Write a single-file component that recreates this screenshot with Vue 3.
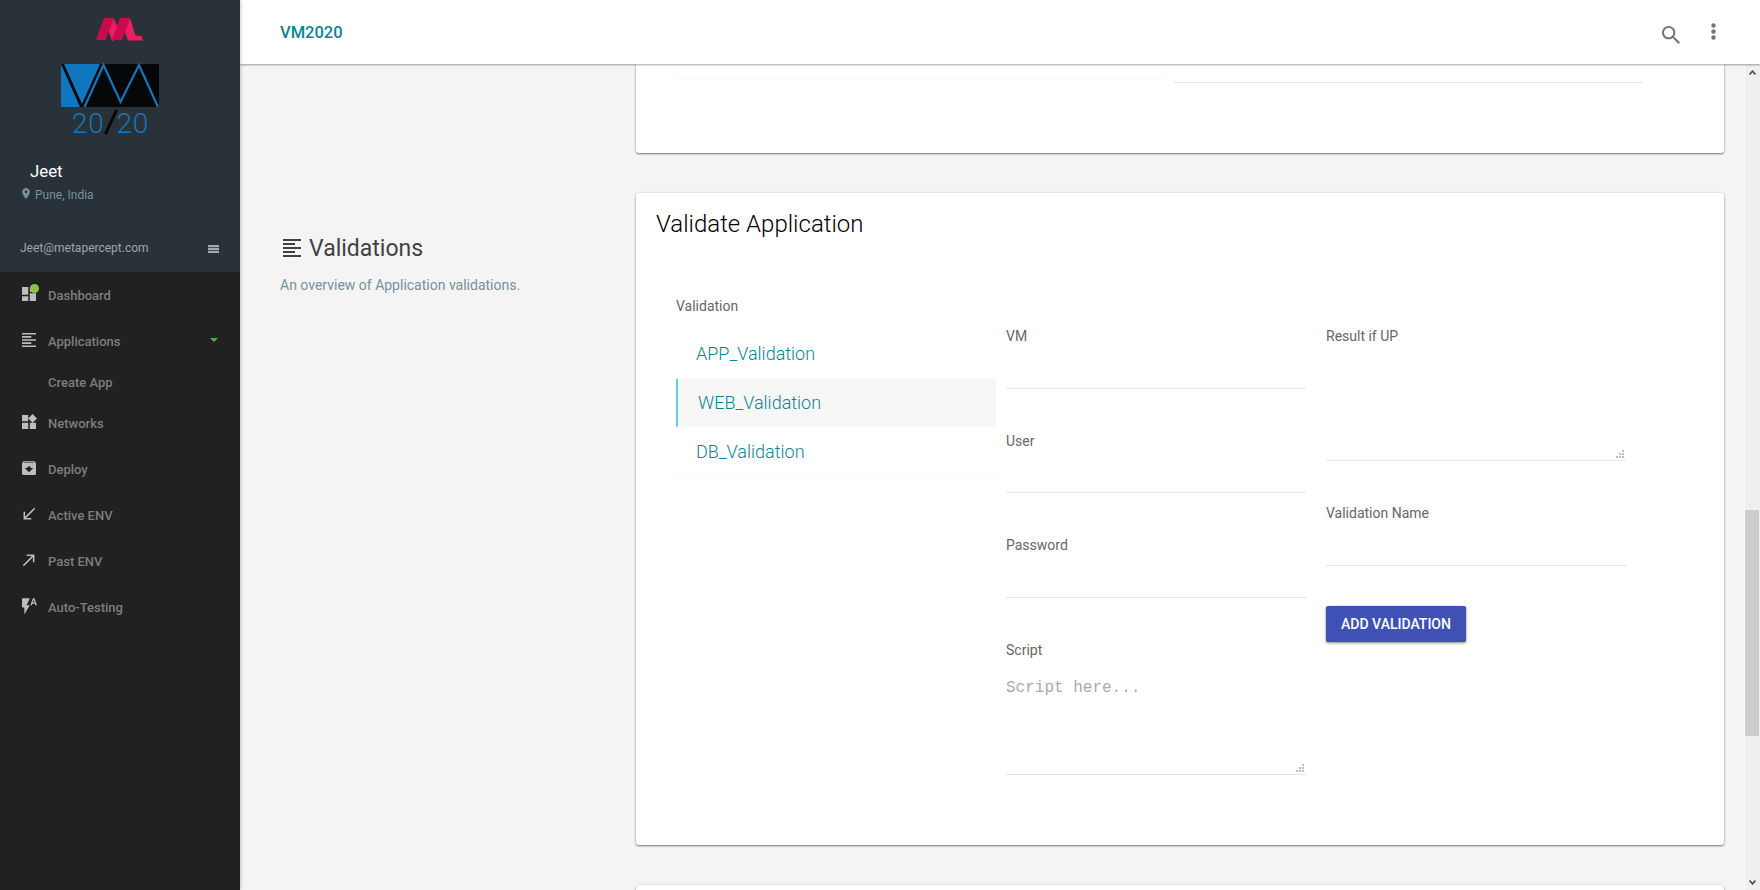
<script setup>
const icons = {
  dashboard: 'M3 13h8V3H3v10zm0 8h8v-6H3v6zm10 0h8V11h-8v10zm0-18v6h8V3h-8z',
  align: 'M15 15H3v2h12v-2zm0-8H3v2h12V7zM3 13h18v-2H3v2zm0 8h18v-2H3v2zM3 3v2h18V3H3z',
  widgets: 'M13 13v8h8v-8h-8zM3 21h8v-8H3v8zM3 3v8h8V3H3zm13.66-1.31L11 7.34 16.66 13l5.66-5.66-5.66-5.65z',
  archive: 'M20.54 5.23l-1.39-1.68C18.88 3.21 18.47 3 18 3H6c-.47 0-.88.21-1.16.55L3.46 5.23C3.17 5.57 3 6.02 3 6.5V19c0 1.1.9 2 2 2h14c1.1 0 2-.9 2-2V6.5c0-.48-.17-.93-.46-1.27zM12 17.5L6.5 12H10v-2h4v2h3.5L12 17.5zM5.12 5l.81-1h12l.94 1H5.12z',
  received: 'M20 5.41L18.59 4 7 15.59V9H5v10h10v-2H8.41z',
  made: 'M9 5v2h6.59L4 18.59 5.41 20 17 8.41V15h2V5z',
  flash: 'M3 2v12h3v9l7-12H9l4-9H3zm16 0h-2l-3.2 9h1.9l.7-2h3.2l.7 2h1.9L19 2zm-2.15 5.65L18 4l1.15 3.65h-2.3z',
}
const nav = [
  { label: 'Dashboard', icon: icons.dashboard, dot: true },
  { label: 'Applications', icon: icons.align, caret: true },
  { label: 'Create App', sub: true },
  { label: 'Networks', icon: icons.widgets },
  { label: 'Deploy', icon: icons.archive },
  { label: 'Active ENV', icon: icons.received },
  { label: 'Past ENV', icon: icons.made },
  { label: 'Auto-Testing', icon: icons.flash },
]
const validations = ['APP_Validation', 'WEB_Validation', 'DB_Validation']
const active = 'WEB_Validation'
const fields = ['VM', 'User', 'Password']
</script>

<template>
  <div class="app">
    <aside class="sidebar">
      <div class="profile">
        <svg class="brand" width="48" height="24" viewBox="0 0 48 24">
          <path d="M17.500 0L22 10L17 23H16L12.500 13Z" fill="#e91e63" />
          <path d="M8 0h10L9.500 22H0Z" fill="#c90b4d" />
          <path d="M34 0L39.500 17.500L45.500 18L47 22.500H32L28.500 13Z" fill="#e91e63" />
          <path d="M24 0h10L26 22H16Z" fill="#c90b4d" />
        </svg>
        <svg class="logo" width="98" height="72" viewBox="0 0 98 72">
          <rect width="98" height="43" fill="#050708" />
          <path d="M0 0L19 43H0Z M3 0H39L21 40Z" fill="#0f77bf" />
          <path d="M23.500 43L42.500 1L59.500 38L78 1L97 43" fill="none" stroke="#1575b8" stroke-width="2.200" />
          <text x="11" y="69" class="logo-text">20</text>
          <path d="M44.500 70L55.500 46" stroke="#050708" stroke-width="3" />
          <text x="55.500" y="69" class="logo-text">20</text>
        </svg>
        <div class="name">Jeet</div>
        <div class="place">
          <svg width="8" height="11" viewBox="5 2 14 20"><path fill="#78909c" d="M12 2C8.130 2 5 5.130 5 9c0 5.250 7 13 7 13s7-7.750 7-13c0-3.870-3.130-7-7-7zm0 9.500a2.500 2.500 0 0 1 0-5 2.500 2.500 0 0 1 0 5z" /></svg>
          <span>Pune, India</span>
        </div>
        <div class="mail">
          <span>Jeet@metapercept.com</span>
          <svg width="11" height="8" viewBox="0 0 11 8" fill="#a3a9ac"><path d="M0 0h11v2.200H0zM0 2.900h11v2.200H0zM0 5.800h11V8H0z" /></svg>
        </div>
      </div>
      <nav class="nav">
        <a v-for="n in nav" :key="n.label" class="nav-item" :class="{ sub: n.sub }">
          <span class="nav-icon">
            <svg v-if="n.icon" width="14" height="14" viewBox="3 3 18 18"><path :d="n.icon" fill="#bdbdbd" /></svg>
            <i v-if="n.dot" class="dot"></i>
          </span>
          <span class="nav-label">{{ n.label }}</span>
          <svg v-if="n.caret" class="caret" width="8" height="4" viewBox="0 0 8 4"><path d="M0 0h8L4 4z" fill="#4caf50" /></svg>
        </a>
      </nav>
    </aside>

    <div class="page">
      <header class="topbar">
        <span class="title">VM2020</span>
        <svg class="search" width="18" height="18" viewBox="3 3 17.500 17.500"><path fill="#757575" d="M15.500 14h-.79l-.28-.27C15.410 12.590 16 11.110 16 9.500 16 5.910 13.090 3 9.500 3S3 5.910 3 9.500 5.910 16 9.500 16c1.610 0 3.090-.59 4.230-1.570l.27.28v.79l5 4.990L20.490 19l-4.990-5zm-6 0C7.010 14 5 11.990 5 9.500S7.010 5 9.500 5 14 7.010 14 9.500 11.990 14 9.500 14z" /></svg>
        <svg class="more" width="5" height="17" viewBox="0 0 5 17" fill="#757575"><circle cx="2.500" cy="2.500" r="2.200" /><circle cx="2.500" cy="8.500" r="2.200" /><circle cx="2.500" cy="14.500" r="2.200" /></svg>
      </header>

      <div class="body">
        <main class="content">
          <section class="intro">
            <h2><svg width="18" height="18" viewBox="3 3 18 18"><path :d="icons.align" fill="#424242" /></svg><span>Validations</span></h2>
            <p>An overview of Application validations.</p>
          </section>
          <div class="cards">
            <section class="card previous">
              <div class="faint-line"></div>
              <div class="field-line"></div>
            </section>
            <section class="card validate">
              <h3>Validate Application</h3>
              <div class="columns">
                <div class="list">
                  <div class="label">Validation</div>
                  <ul>
                    <li v-for="v in validations" :key="v" :class="{ active: v === active }">{{ v }}</li>
                  </ul>
                </div>
                <div class="form">
                  <div v-for="f in fields" :key="f" class="field">
                    <div class="label">{{ f }}</div>
                  </div>
                  <div class="field area">
                    <div class="label">Script</div>
                    <div class="placeholder">Script here...</div>
                    <svg class="grip" width="8" height="8" viewBox="0 0 8 8" fill="#bdbdbd"><path d="M6 0h2v2H6zM3 3h2v2H3zM6 3h2v2H6zM0 6h2v2H0zM3 6h2v2H3zM6 6h2v2H6z" /></svg>
                  </div>
                </div>
                <div class="form">
                  <div class="field area">
                    <div class="label">Result if UP</div>
                    <svg class="grip" width="8" height="8" viewBox="0 0 8 8" fill="#bdbdbd"><path d="M6 0h2v2H6zM3 3h2v2H3zM6 3h2v2H6zM0 6h2v2H0zM3 6h2v2H3zM6 6h2v2H6z" /></svg>
                  </div>
                  <div class="field">
                    <div class="label">Validation Name</div>
                  </div>
                  <button class="add">ADD VALIDATION</button>
                </div>
              </div>
            </section>
            <section class="card next"></section>
          </div>
        </main>
        <div class="scrollbar">
          <svg width="7" height="5" viewBox="0 0 7 5"><path d="M.5 4.500L3.500 1.200L6.500 4.500" fill="none" stroke="#555" stroke-width="1.800" /></svg>
          <div class="thumb"></div>
          <svg width="7" height="5" viewBox="0 0 7 5"><path d="M.5 .5L3.500 3.800L6.500 .5" fill="none" stroke="#555" stroke-width="1.800" /></svg>
        </div>
      </div>
    </div>
  </div>
</template>

<style>
body { margin: 0; overflow: hidden; }
</style>

<style scoped>
* { box-sizing: border-box; }
.app { display: flex; width: 1760px; height: 890px; overflow: hidden; background: #f4f4f4; font-family: Roboto, sans-serif; color: #212121; }
.sidebar { width: 240px; flex: none; background: #212121; box-shadow: 0 0 4px rgba(0, 0, 0, .3); z-index: 3; }
.profile { height: 272px; background: #283238; display: flex; flex-direction: column; align-items: flex-start; padding-top: 18px; }
.brand { margin-left: 96px; display: block; }
.logo { margin: 22px 0 0 61px; display: block; overflow: visible; }
.logo-text { font: 300 28px Roboto, sans-serif; letter-spacing: .7px; fill: #1575b8; }
.name { margin: 25px 0 0 30px; font-size: 16.800px; line-height: 20px; color: #fff; }
.place { margin: 5px 0 0 22px; display: flex; align-items: center; gap: 5px; font-size: 12px; line-height: 18px; color: #78909c; }
.place svg { margin-top: -3px; }
.mail { margin-top: 35px; width: 100%; padding: 0 21px 0 20px; display: flex; align-items: center; justify-content: space-between; font-size: 12px; line-height: 18px; color: #a0a5a8; }
.mail svg { margin-top: 2px; }
.nav-item { display: flex; align-items: center; height: 46px; padding: 0 22px; font-size: 13px; font-weight: 500; color: #7d7d7d; }
.nav-item.sub { height: 36px; }
.nav-icon { position: relative; width: 26px; height: 14px; margin-top: -2px; }
.nav-icon svg { display: block; overflow: visible; }
.nav-label { flex: 1; }
.caret { margin-top: -2px; }
.dot { position: absolute; left: 8px; top: -3px; width: 9px; height: 9px; border-radius: 50%; background: #8bc34a; }
.page { flex: 1; display: flex; flex-direction: column; min-width: 0; }
.topbar { height: 64px; flex: none; display: flex; align-items: center; padding: 0 44px 0 40px; background: #fff; box-shadow: 0 1px 2px rgba(0, 0, 0, .36); z-index: 2; }
.title { flex: 1; font-size: 16.500px; font-weight: 500; color: #0b8494; }
.search { margin: 5px 31px 0 0; }
.more { margin-top: -1px; }
.body { flex: 1; min-height: 0; display: flex; }
.content { flex: 1; display: flex; padding: 0 20px 0 40px; overflow: hidden; }
.intro { width: 356px; flex: none; padding-top: 168px; }
.intro h2 { margin: 0; display: flex; align-items: center; height: 32px; font-size: 23px; line-height: 32px; font-weight: 400; color: #424242; }
.intro h2 svg { margin: 0 8px 0 3px; }
.intro h2 span { padding-top: 2px; }
.intro p { margin: 11px 0 0; font-size: 14px; line-height: 20px; color: #78909c; }
.cards { width: 1088px; flex: none; }
.card { background: #fff; border-radius: 3px; box-shadow: 0 1px 2px rgba(0, 0, 0, .5), 0 0 3px rgba(0, 0, 0, .1); }
.previous { height: 89px; display: flex; padding-left: 40px; border-radius: 0 0 3px 3px; }
.faint-line { width: 488px; height: 15px; margin-right: 10px; border-bottom: 1px solid #f7f7f7; }
.field-line { width: 468px; height: 19px; border-bottom: 1px solid #e5e5e5; }
.validate { height: 652px; margin-top: 40px; }
.validate h3 { margin: 0; padding: 16px 0 0 20px; font-size: 24px; line-height: 31px; font-weight: 300; color: #000; }
.columns { display: flex; padding-left: 40px; }
.label { font-size: 14px; line-height: 20px; color: #666; }
.list { width: 320px; margin: 56px 10px 0 0; }
ul { list-style: none; margin: 13px 0 0; padding: 0; }
li { height: 49px; padding-left: 20px; border-bottom: 1px solid #f7f7f7; font-size: 18px; line-height: 49px; font-weight: 300; color: #0b8494; }
li:first-child { height: 50px; }
li.active { height: 48px; line-height: 47px; background: #f7f7f7; border-left: 2px solid #5ad2e0; }
.form { width: 300px; margin: 86px 0 0; }
.form + .form { margin-left: 20px; }
.field { height: 63px; border-bottom: 1px solid #e5e5e5; margin-bottom: 42px; }
.field:nth-child(2) { height: 62px; }
.form + .form .field:nth-child(2) { height: 63px; margin-bottom: 40px; }
.area { position: relative; height: 135px; }
.placeholder { margin-top: 17px; font: 16px/22px "Liberation Mono", monospace; color: #aaa; }
.grip { position: absolute; right: 2px; bottom: 2px; }
.add { display: block; width: 140px; height: 36px; padding: 0; border: 0; border-radius: 2px; background: #3f51b5; color: #fff; font: 500 14px/36px Roboto, sans-serif; box-shadow: 0 1px 3px rgba(0, 0, 0, .5); }
.next { height: 60px; margin-top: 40px; }
.scrollbar { width: 16px; border-left: 1px solid #fafafa; background: #efefef; display: flex; flex-direction: column; align-items: center; padding: 6px 1px 5px 0; z-index: 1; }
.thumb { width: 14px; height: 226px; margin: 435px 0 auto; background: #cdcdcd; flex: none; }
</style>
